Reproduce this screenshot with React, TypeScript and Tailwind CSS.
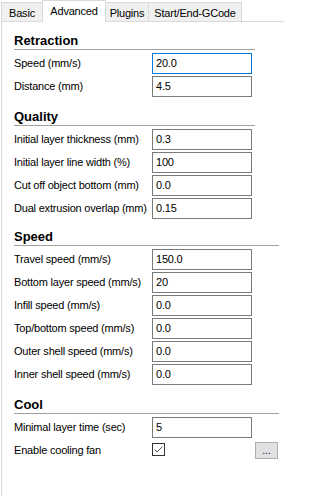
import React from 'react';

type Row = { label: string; value: string; focused?: boolean };

const sections: { title: string; wide: boolean; gap: string; rows: Row[] }[] = [
  {
    title: 'Retraction',
    wide: false,
    gap: 'mt-0',
    rows: [
      { label: 'Speed (mm/s)', value: '20.0', focused: true },
      { label: 'Distance (mm)', value: '4.5' },
    ],
  },
  {
    title: 'Quality',
    wide: false,
    gap: 'mt-[12px]',
    rows: [
      { label: 'Initial layer thickness (mm)', value: '0.3' },
      { label: 'Initial layer line width (%)', value: '100' },
      { label: 'Cut off object bottom (mm)', value: '0.0' },
      { label: 'Dual extrusion overlap (mm)', value: '0.15' },
    ],
  },
  {
    title: 'Speed',
    wide: true,
    gap: 'mt-[10px]',
    rows: [
      { label: 'Travel speed (mm/s)', value: '150.0' },
      { label: 'Bottom layer speed (mm/s)', value: '20' },
      { label: 'Infill speed (mm/s)', value: '0.0' },
      { label: 'Top/bottom speed (mm/s)', value: '0.0' },
      { label: 'Outer shell speed (mm/s)', value: '0.0' },
      { label: 'Inner shell speed (mm/s)', value: '0.0' },
    ],
  },
];

const Field = ({ value, focused }: { value: string; focused?: boolean }) => (
  <div
    className={`w-[100px] h-[21px] border bg-white pl-[3px] flex items-center text-[11px] text-black ${
      focused ? 'border-[#0078d7]' : 'border-[#7a7a7a]'
    }`}
  >
    {value}
  </div>
);

const Header = ({ title, wide }: { title: string; wide: boolean }) => (
  <div>
    <div className="h-[16px] leading-[16px] text-[13px] font-bold tracking-normal text-black">{title}</div>
    <div className={`h-px bg-[#a0a0a0] ${wide ? 'w-[265px]' : 'w-[241px]'}`} />
  </div>
);

const FieldRow = ({ row }: { row: Row }) => (
  <div className="flex items-center h-[21px]">
    <div className="w-[138px] whitespace-nowrap text-black">{row.label}</div>
    <Field value={row.value} focused={row.focused} />
  </div>
);

const App = () => {
  return (
    <div
      className="w-[284px] h-[496px] bg-white overflow-hidden flex flex-col text-[11px] tracking-[-0.2px]"
      style={{ fontFamily: '"Liberation Sans", Arial, sans-serif' }}
    >
      {/* tabs */}
      <div className="flex items-end h-[21px] ml-[1px] relative z-10">
        <div className="w-[41px] h-[19px] border-t border-l border-[#d9d9d9] bg-[#f0f0f0] text-center pt-[3px] leading-[14px] text-black">
          Basic
        </div>
        <div className="w-[64px] h-[22px] -mb-px border-t border-l border-r border-[#d9d9d9] bg-white text-center pt-[3px] leading-[14px] text-black">
          Advanced
        </div>
        <div className="w-[43px] h-[19px] border-t border-r border-[#d9d9d9] bg-[#f0f0f0] text-center pt-[3px] leading-[14px] text-black">
          Plugins
        </div>
        <div className="w-[93px] h-[19px] border-t border-r border-[#d9d9d9] bg-[#f0f0f0] text-center pt-[3px] leading-[14px] text-black whitespace-nowrap">
          Start/End-GCode
        </div>
      </div>

      {/* panel */}
      <div className="flex-1 ml-[1px] border-t border-l border-[#d9d9d9] bg-white pl-[12px] pt-[11px]">
        {sections.map((s) => (
          <div key={s.title} className={s.gap}>
            <Header title={s.title} wide={s.wide} />
            <div className="mt-[3px] flex flex-col gap-[2px]">
              {s.rows.map((r) => (
                <FieldRow key={r.label} row={r} />
              ))}
            </div>
          </div>
        ))}

        <div className="mt-[12px]">
          <Header title="Cool" wide />
          <div className="mt-[3px] flex flex-col gap-[2px]">
            <FieldRow row={{ label: 'Minimal layer time (sec)', value: '5' }} />
            <div className="flex items-center h-[21px]">
              <div className="w-[138px] whitespace-nowrap text-black">Enable cooling fan</div>
              <div className="w-[100px] flex items-center">
                <div className="w-[13px] h-[13px] border border-[#333333] bg-white -mt-[2px]">
                  <svg width="11" height="11" viewBox="0 0 11 11" className="block">
                    <path d="M1.5 5.5 L4 8 L9.5 2.5" fill="none" stroke="#555555" strokeWidth="1" />
                  </svg>
                </div>
              </div>
              <button className="ml-[3px] w-[23px] h-[17px] bg-[#e1e1e1] border border-[#adadad] text-[11px] leading-[10px] text-[#1a0a3a] flex items-center justify-center pb-[2px]">
                ...
              </button>
            </div>
          </div>
        </div>
      </div>
    </div>
  );
};

export default App;
